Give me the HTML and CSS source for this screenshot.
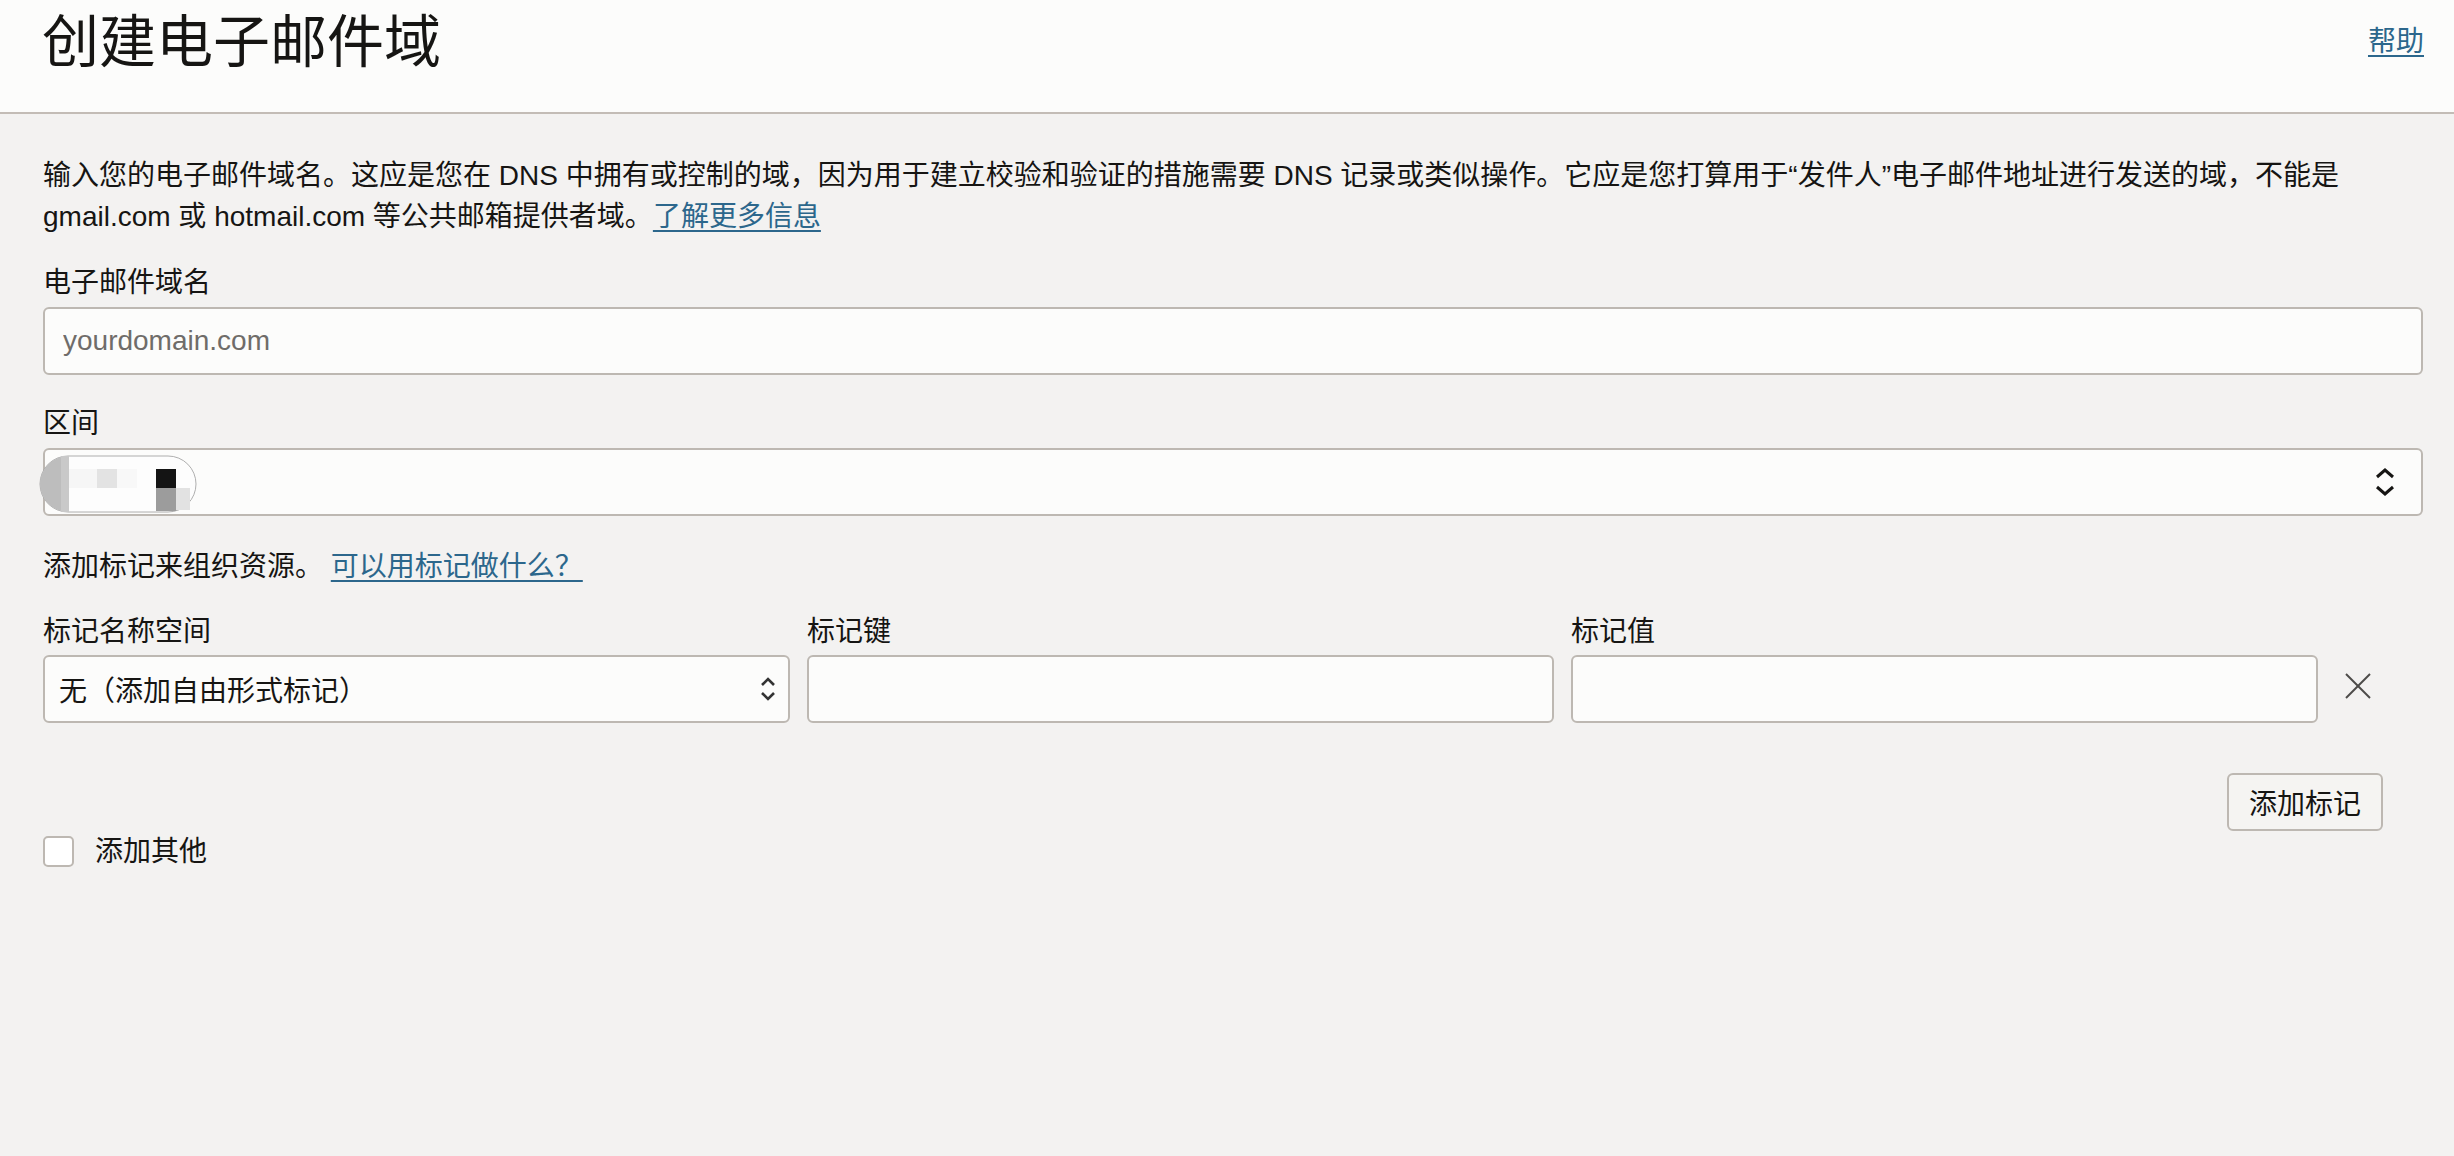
FILE: index.html
```html
<!DOCTYPE html>
<html lang="zh-CN">
<head>
<meta charset="utf-8">
<title>创建电子邮件域</title>
<link rel="stylesheet" href="styles.css">
</head>
<body>
<header class="page-header">
  <h1 class="page-title">创建电子邮件域</h1>
  <a class="help-link" href="#">帮助</a>
</header>
<main class="content">
  <p class="intro">输入您的电子邮件域名。这应是您在 DNS 中拥有或控制的域，因为用于建立校验和验证的措施需要 DNS 记录或类似操作。它应是您打算用于“发件人”电子邮件地址进行发送的域，不能是 gmail.com 或 hotmail.com 等公共邮箱提供者域。<a class="link" href="#">了解更多信息</a></p>

  <div class="field field-domain">
    <label class="field-label">电子邮件域名</label>
    <input class="text-input" type="text" placeholder="yourdomain.com">
  </div>

  <div class="field field-zone">
    <label class="field-label">区间</label>
    <div class="select select-large">
      <svg class="redact" width="160" height="58" viewBox="0 0 160 58">
        <rect x="1" y="1" width="156" height="56" rx="28" fill="#fdfdfd" stroke="#9a9a9a" stroke-width="0.8"/>
        <path d="M29 1 A28 28 0 0 0 29 57 L22 57 L22 1 Z" fill="#bdbdbd"/>
        <rect x="22" y="1" width="8" height="56" fill="#c9c9c9"/>
        <rect x="30" y="14" width="28" height="19" fill="#f6f6f6"/>
        <rect x="58" y="14" width="20" height="19" fill="#e3e3e3"/>
        <rect x="78" y="14" width="20" height="19" fill="#f8f8f8"/>
        <rect x="117" y="14" width="20" height="19" fill="#141414"/>
        <rect x="117" y="33" width="20" height="23" fill="#9c9c9c"/>
        <rect x="137" y="33" width="14" height="22" fill="#e2e2e2"/>
      </svg>
      <svg class="chev-large" width="20" height="32" viewBox="0 0 20 32">
        <polyline points="2,11 10,4 18,11" fill="none" stroke="#161513" stroke-width="3"/>
        <polyline points="2,21 10,28 18,21" fill="none" stroke="#161513" stroke-width="3"/>
      </svg>
    </div>
  </div>

  <p class="tags-intro">添加标记来组织资源。 <a class="link" href="#">可以用标记做什么？</a></p>

  <div class="tag-grid">
    <label class="field-label">标记名称空间</label>
    <label class="field-label">标记键</label>
    <label class="field-label">标记值</label>
    <span></span>
    <div class="select select-small">
      <span>无（添加自由形式标记）</span>
      <svg class="chev-small" width="16" height="28" viewBox="0 0 16 28">
        <polyline points="2,10 8,4 14,10" fill="none" stroke="#333" stroke-width="2.6"/>
        <polyline points="2,18 8,24 14,18" fill="none" stroke="#333" stroke-width="2.6"/>
      </svg>
    </div>
    <input class="text-input" type="text">
    <input class="text-input" type="text">
    <button class="remove-btn" type="button" aria-label="删除">
      <svg width="28" height="26" viewBox="0 0 28 26">
        <line x1="2" y1="1" x2="26" y2="25" stroke="#4d4b49" stroke-width="2"/>
        <line x1="26" y1="1" x2="2" y2="25" stroke="#4d4b49" stroke-width="2"/>
      </svg>
    </button>
  </div>

  <div class="button-row">
    <button class="btn" type="button">添加标记</button>
  </div>

  <div class="check-row">
    <span class="checkbox"></span>
    <span class="check-label">添加其他</span>
  </div>
</main>
</body>
</html>
```
FILE: styles.css
```css
* { box-sizing: border-box; }
html, body {
  margin: 0;
  padding: 0;
}
body {
  background: #f3f2f1;
  color: #161513;
  font-family: "Liberation Sans", "Noto Sans CJK SC", sans-serif;
  font-size: 28px;
  min-height: 1156px;
}
.page-header {
  background: #fcfcfb;
  height: 114px;
  border-bottom: 2px solid #c3bcb6;
  display: flex;
  justify-content: space-between;
  align-items: flex-start;
  padding: 14px 30px 0 42px;
}
.page-title {
  margin: 0;
  font-size: 57px;
  line-height: 57px;
  font-weight: 400;
}
.help-link {
  margin-top: 14px;
  font-size: 28px;
  line-height: 28px;
  color: #2c678c;
  text-decoration: underline;
  text-underline-offset: 4px;
}
.content {
  padding: 41px 31px 0 43px;
}
.intro {
  margin: 0;
  line-height: 41px;
}
.link {
  color: #2c678c;
  text-decoration: underline;
  text-underline-offset: 4px;
}
.field-label {
  display: block;
  line-height: 40px;
}
.field-domain { margin-top: 26px; }
.field-zone { margin-top: 29px; }
.text-input {
  display: block;
  width: 100%;
  height: 68px;
  margin-top: 4px;
  border: 2px solid #bdb8b2;
  border-radius: 6px;
  background: #fcfcfb;
  padding: 0 18px;
  font-family: "Liberation Sans", "Noto Sans CJK SC", sans-serif;
  font-size: 28px;
  color: #161513;
  outline: none;
}
.text-input::placeholder { color: #6f6c69; }
.select {
  position: relative;
  height: 68px;
  margin-top: 4px;
  border: 2px solid #bdb8b2;
  border-radius: 6px;
  background: #fcfcfb;
  display: flex;
  align-items: center;
  justify-content: space-between;
}
.select-large { padding: 0 26px 0 14px; }
.select-small { padding: 0 12px 0 14px; }
.redact {
  position: absolute;
  left: -6px;
  top: 5px;
}
.chev-large { margin-left: auto; }
.tags-intro {
  margin: 31px 0 0;
  line-height: 40px;
}
.tag-grid {
  margin-top: 25px;
  display: grid;
  grid-template-columns: 1fr 1fr 1fr 88px;
  column-gap: 17px;
  row-gap: 3px;
  align-items: center;
}
.tag-grid .text-input,
.tag-grid .select { margin-top: 0; }
.remove-btn {
  justify-self: start;
  margin-left: 9px;
  margin-top: -6px;
  background: none;
  border: 0;
  padding: 0;
  display: flex;
}
.button-row {
  margin-top: 50px;
  display: flex;
  justify-content: flex-end;
  padding-right: 40px;
}
.btn {
  height: 58px;
  padding: 0 20px;
  border: 2px solid #bdb8b2;
  border-radius: 6px;
  background: #f5f4f2;
  color: #161513;
  font-family: "Liberation Sans", "Noto Sans CJK SC", sans-serif;
  font-size: 28px;
}
.check-row {
  margin-top: 1px;
  display: flex;
  align-items: center;
}
.checkbox {
  width: 31px;
  height: 31px;
  border: 2px solid #bdb8b2;
  border-radius: 5px;
  background: #fff;
}
.check-label {
  margin-left: 21px;
  line-height: 36px;
  margin-top: 2px;
}
```
